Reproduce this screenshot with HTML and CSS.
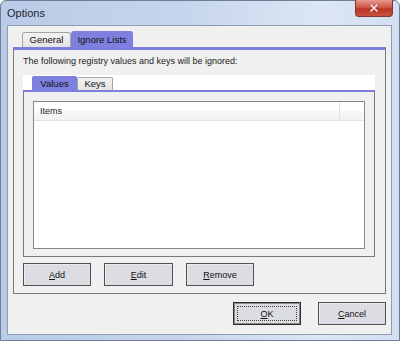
FILE: index.html
```html
<!DOCTYPE html>
<html>
<head>
<meta charset="utf-8">
<link rel="stylesheet" href="styles.css">
</head>
<body>
<div class="window">
  <div class="titlebar">
    <span class="title">Options</span>
    <div class="close">
      <svg width="10" height="8" viewBox="0 0 10 8"><path d="M1.5 0.5 L8.5 7.5 M8.5 0.5 L1.5 7.5" stroke="#8a3128" stroke-width="2.6" stroke-linecap="square" opacity="0.5"/><path d="M1.5 0.5 L8.5 7.5 M8.5 0.5 L1.5 7.5" stroke="#f4eeee" stroke-width="1.6"/></svg>
    </div>
  </div>
  <div class="client">
    <div class="tabs">
      <div class="tab">General</div>
      <div class="tab active">Ignore Lists</div>
    </div>
    <div class="page">
      <div class="intro">The following registry values and keys will be ignored:</div>
      <div class="subtabs">
        <div class="subtab active">Values</div>
        <div class="subtab">Keys</div>
      </div>
      <div class="subpage">
        <div class="listview">
          <div class="lv-header">
            <div class="lv-col">Items</div>
            <div class="lv-rest"></div>
          </div>
        </div>
      </div>
      <div class="btnrow">
        <button class="btn"><u>A</u>dd</button>
        <button class="btn"><u>E</u>dit</button>
        <button class="btn"><u>R</u>emove</button>
      </div>
    </div>
    <div class="dlgrow">
      <button class="btn default"><span class="focus"><u>O</u>K</span></button>
      <button class="btn"><u>C</u>ancel</button>
    </div>
  </div>
</div>
</body>
</html>
```

FILE: styles.css
```css
html, body {
  margin: 0;
  padding: 0;
}
body {
  width: 400px;
  height: 341px;
  overflow: hidden;
  font-family: "Liberation Sans", Arial, sans-serif;
  font-size: 9px;
  color: #1a1a1a;
  background: #fff;
}
.window {
  box-sizing: border-box;
  width: 400px;
  height: 341px;
  border: 1px solid #6f7d96;
  border-radius: 6px 6px 0 0;
  background: linear-gradient(to right, #b9cbe7 0%, #c6d5ec 45%, #dce6f4 80%, #d3dff0 100%);
  display: flex;
  flex-direction: column;
}
.titlebar {
  height: 24px;
  display: flex;
  align-items: flex-start;
  flex: none;
}
.title {
  font-size: 11px;
  color: #1e2433;
  margin: 6px 0 0 6px;
  flex: 1;
}
.close {
  width: 38px;
  height: 17px;
  margin: -1px 6px 0 0;
  box-sizing: border-box;
  border: 1px solid #7a3a35;
  border-top: none;
  border-radius: 0 0 4px 4px;
  background: linear-gradient(to bottom, #e59a8e 0%, #d0584a 45%, #bc3526 55%, #c8503d 100%);
  display: flex;
  align-items: center;
  justify-content: center;
}
.client {
  box-sizing: border-box;
  margin: 0 7px 5px 6px;
  height: 310px;
  border: 1px solid #8f9cb2;
  background: #f0f0f0;
  padding: 5px 5px 0 5px;
  display: flex;
  flex-direction: column;
}
.tabs {
  display: flex;
  align-items: flex-end;
  padding-left: 9px;
  height: 16px;
  flex: none;
}
.tab {
  box-sizing: border-box;
  height: 15px;
  width: 49px;
  border: 1px solid #a5a5a5;
  border-bottom: none;
  border-radius: 3px 3px 0 0;
  background: linear-gradient(to bottom, #f2f2f2, #e3e3e3);
  text-align: center;
  line-height: 14px;
  font-size: 9.5px;
  color: #111;
}
.tab.active {
  height: 16px;
  width: 62px;
  background: #7d80de;
  border-color: #7d80de;
  line-height: 16px;
}
.page {
  box-sizing: border-box;
  height: 247px;
  border: 1px solid #7a7a7a;
  border-top: 3px solid #7d80de;
  background: #f0f0f0;
  padding: 5px 10px 0 9px;
  display: flex;
  flex-direction: column;
  flex: none;
}
.intro {
  height: 13px;
  line-height: 13px;
  margin-bottom: 7px;
}
.subtabs {
  height: 15px;
  background: #fff;
  display: flex;
  align-items: flex-end;
  padding-left: 9px;
  flex: none;
}
.subtab {
  box-sizing: border-box;
  height: 13px;
  width: 36px;
  border: 1px solid #a5a5a5;
  border-bottom: none;
  border-radius: 2px 2px 0 0;
  background: linear-gradient(to bottom, #f2f2f2, #e4e4e4);
  text-align: center;
  line-height: 12px;
  font-size: 9.5px;
  color: #111;
}
.subtab.active {
  width: 45px;
  height: 14px;
  background: #7d80de;
  border-color: #7d80de;
  line-height: 14px;
}
.subpage {
  box-sizing: border-box;
  height: 167px;
  border: 1px solid #7a7a7a;
  border-top: 2px solid #7d80de;
  padding: 9px 9px 7px 9px;
  flex: none;
}
.listview {
  box-sizing: border-box;
  height: 148px;
  border: 1px solid #828790;
  background: #fff;
}
.lv-header {
  height: 18px;
  display: flex;
  background: linear-gradient(to bottom, #ffffff 0%, #ffffff 50%, #f7f8fa 51%, #f2f3f5 100%);
  border-bottom: 1px solid #e2e3e6;
}
.lv-col {
  width: 306px;
  border-right: 1px solid #e2e3e6;
  padding-left: 6px;
  box-sizing: border-box;
  line-height: 18px;
  color: #222;
}
.lv-rest {
  flex: 1;
}
.btnrow {
  display: flex;
  gap: 13px;
  margin-top: 6px;
}
.btn {
  box-sizing: border-box;
  width: 68px;
  height: 23px;
  margin: 0;
  padding: 0;
  font-family: "Liberation Sans", Arial, sans-serif;
  font-size: 9px;
  color: #111;
  border: 1px solid #505050;
  background: #dcdde3;
  box-shadow: inset 1px 1px 0 #ececf0;
  border-radius: 0;
}
.btnrow .btn:nth-child(2) {
  width: 69px;
}
.dlgrow {
  display: flex;
  justify-content: flex-end;
  gap: 17px;
  margin-top: 8px;
}
.btn.default {
  border: 1px solid #2c2c2c;
  box-shadow: inset 0 0 0 1px #8a8a8a;
  display: flex;
  align-items: center;
  justify-content: center;
  padding: 3px;
}
.focus {
  box-sizing: border-box;
  width: 100%;
  height: 100%;
  border: 1px dotted #444;
  display: flex;
  align-items: center;
  justify-content: center;
}
```
